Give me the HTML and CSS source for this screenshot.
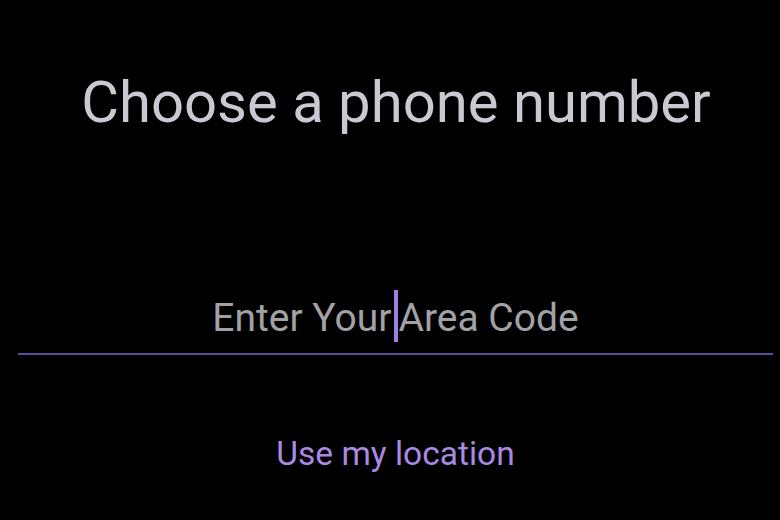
FILE: index.html
```html
<!DOCTYPE html>
<html>
<head>
<meta charset="utf-8">
<link rel="stylesheet" href="styles.css">
</head>
<body>
<main class="screen">
  <h1 class="title">Choose a phone number</h1>
  <div class="field">
    <div class="input"><span class="ph">Enter Your</span><span class="caret"></span><span class="ph">Area Code</span></div>
    <div class="underline"></div>
  </div>
  <a class="link">Use my location</a>
</main>
</body>
</html>
```
FILE: styles.css
```css
html, body {
  margin: 0;
  padding: 0;
  background: #000;
}
.screen {
  width: 780px;
  height: 520px;
  display: flex;
  flex-direction: column;
  align-items: center;
  font-family: Roboto, "Noto Sans", sans-serif;
  overflow: hidden;
}
.title {
  margin: 66px 0 0 0;
  font-weight: 400;
  font-size: 58px;
  line-height: 72px;
  color: #c9c9d2;
  letter-spacing: 0;
  padding-left: 12px;
}
.field {
  margin-top: 151px;
  align-self: stretch;
  padding: 0 7px 0 18px;
  display: flex;
  flex-direction: column;
}
.input {
  display: flex;
  justify-content: center;
  align-items: center;
  height: 58px;
  font-size: 39px;
  color: #a2a2a6;
}
.caret {
  align-self: flex-start;
  width: 4px;
  height: 52px;
  margin: 1px 1px 0 2px;
  background: #a27ee2;
}
.underline {
  height: 2px;
  margin-top: 6px;
  background: #5c4aa0;
}
.link {
  margin-top: 79px;
  padding-left: 11px;
  font-size: 33.5px;
  color: #a98ae2;
}
```
